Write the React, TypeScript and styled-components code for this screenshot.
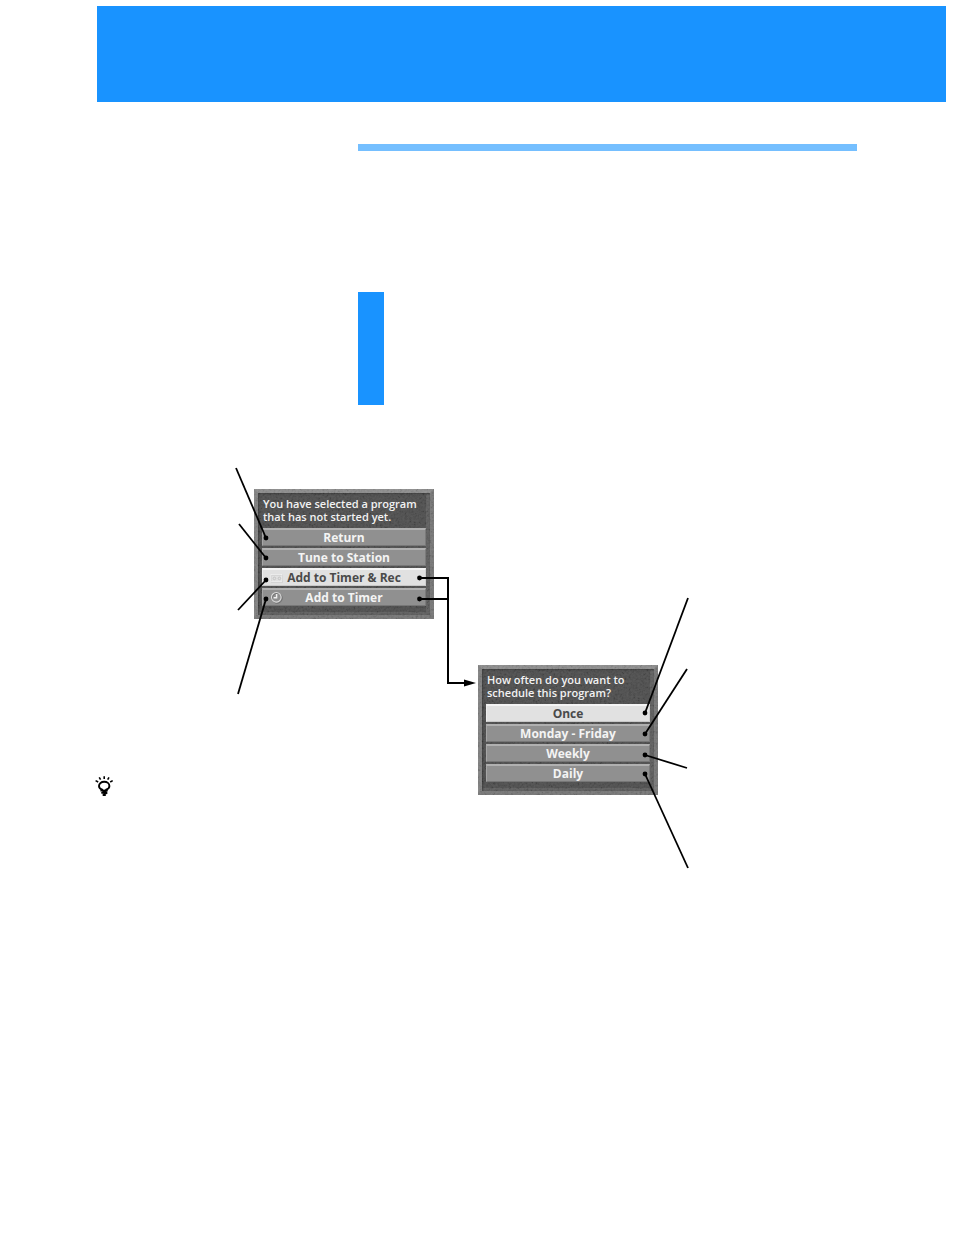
import React from 'react';
import styled, { createGlobalStyle, css } from 'styled-components';

const GlobalStyle = createGlobalStyle`
  *, *::before, *::after { box-sizing: border-box; }
  body {
    margin: 0;
    background: #fff;
    font-family: 'Open Sans', 'Noto Sans', sans-serif;
  }
`;

const Page = styled.main`
  padding: 6px 8px 40px 0;
`;

const Banner = styled.header`
  height: 96px;
  margin-left: 97px;
  background: #1993ff;
`;

const Section = styled.section`
  margin: 42px 89px 0 358px;
`;

const SectionRule = styled.div`
  height: 7px;
  background: #75bfff;
`;

const StepMarker = styled.div`
  width: 26px;
  height: 113px;
  margin-top: 141px;
  background: #1993ff;
`;

const Guide = styled.section`
  display: flex;
  align-items: flex-start;
  gap: 122px;
  margin-top: 62px;
  padding-left: 95px;
`;

const TipIcon = styled.svg`
  flex: none;
  width: 18px;
  height: 20px;
  margin-top: 309px;
  overflow: visible;
`;

const Diagram = styled.figure`
  position: relative;
  flex: none;
  width: 456px;
  height: 403px;
  margin: 0;
`;

const Callouts = styled.svg`
  position: absolute;
  inset: 0;
  width: 100%;
  height: 100%;
  pointer-events: none;
`;

const Dialog = styled.section<{ $x: number; $y: number }>`
  position: absolute;
  left: ${(p) => p.$x}px;
  top: ${(p) => p.$y}px;
  width: 180px;
  height: 130px;
  padding: 4px;
  border: 4px solid;
  border-color: #8b8b8b #747474 #747474 #7e7e7e;
  background: #4b4b4b;
  box-shadow: inset 1px 1px 2px #353535, inset -4px -3px 0 #5b5b5b;
`;

const Grain = styled.svg`
  position: absolute;
  inset: -4px;
  width: 180px;
  height: 130px;
  opacity: 0.08;
`;

const DialogTitle = styled.h2`
  position: relative;
  margin: 0 0 5px;
  padding: 0 0 0 1px;
  color: #f2f2f2;
  font-size: 11px;
  font-weight: 600;
  line-height: 13px;
  white-space: nowrap;
`;

const Options = styled.div`
  position: relative;
  display: flex;
  flex-direction: column;
  gap: 2px;
`;

const Option = styled.button<{ $active?: boolean }>`
  position: relative;
  height: 18px;
  padding: 0;
  border: solid;
  border-width: 2px 1px 1px;
  border-color: #b0b0b0 #7b7b7b #777 #a6a6a6;
  background: #909090;
  color: #f4f4f4;
  font: 700 12px/14px 'Open Sans', 'Noto Sans', sans-serif;
  text-align: center;
  ${(p) =>
    p.$active &&
    css`
      border-color: #f4f4f4 #cfcfcf #c8c8c8 #ededed;
      background: #e1e1e1;
      color: #4a4a4a;
    `}
`;

const OptionIcon = styled.svg`
  position: absolute;
  left: 7px;
  top: 1px;
  width: 13px;
  height: 13px;
`;

type Choice = { label: string; active?: boolean; icon?: 'tape' | 'clock' };

const selectedProgram: Choice[] = [
  { label: 'Return' },
  { label: 'Tune to Station' },
  { label: 'Add to Timer & Rec', active: true, icon: 'tape' },
  { label: 'Add to Timer', icon: 'clock' },
];

const frequency: Choice[] = [
  { label: 'Once', active: true },
  { label: 'Monday - Friday' },
  { label: 'Weekly' },
  { label: 'Daily' },
];

const leaders = [
  [236, 468, 266, 538],
  [239, 524, 266, 558],
  [238, 610, 266, 580],
  [238, 694, 266, 599],
  [688, 598, 645, 713],
  [687, 669, 645, 734],
  [687, 768, 645, 755],
  [688, 868, 645, 774],
];

function ClockIcon() {
  return (
    <OptionIcon viewBox="0 0 13 13" fill="none" aria-hidden="true">
      <circle cx="7.2" cy="7.2" r="5" stroke="#6c6c6c" strokeWidth="1" />
      <circle cx="6.3" cy="6.3" r="4.8" stroke="#dcdcdc" strokeWidth="1.1" />
      <path d="M6.6 3V6.8H3.6" stroke="#f0f0f0" strokeWidth="1.4" />
    </OptionIcon>
  );
}

function TapeIcon() {
  return (
    <OptionIcon viewBox="0 0 13 13" fill="none" aria-hidden="true">
      <rect x="1.5" y="4" width="11" height="7" stroke="#c9c9c9" />
      <rect x="1" y="3.5" width="11" height="7" stroke="#f4f4f4" strokeWidth="0.7" />
      <circle cx="4.4" cy="7.4" r="1.3" stroke="#c4c4c4" />
      <circle cx="9.4" cy="7.4" r="1.3" stroke="#c4c4c4" />
    </OptionIcon>
  );
}

function MenuDialog({ id, x, y, lines, choices }: {
  id: string;
  x: number;
  y: number;
  lines: [string, string];
  choices: Choice[];
}) {
  return (
    <Dialog $x={x} $y={y} aria-labelledby={id}>
      <Grain aria-hidden="true">
        <filter id={`${id}-grain`}>
          <feTurbulence type="fractalNoise" baseFrequency="0.45" numOctaves="2" />
          <feColorMatrix type="matrix" values="2 0 0 0 -0.5  2 0 0 0 -0.5  2 0 0 0 -0.5  0 0 0 0 1" />
        </filter>
        <rect width="100%" height="100%" filter={`url(#${id}-grain)`} />
      </Grain>
      <DialogTitle id={id}>
        {lines[0]}
        <br />
        {lines[1]}
      </DialogTitle>
      <Options>
        {choices.map((c) => (
          <Option key={c.label} type="button" $active={c.active}>
            {c.icon === 'clock' && <ClockIcon />}
            {c.icon === 'tape' && <TapeIcon />}
            {c.label}
          </Option>
        ))}
      </Options>
    </Dialog>
  );
}

export default function App() {
  return (
    <>
      <GlobalStyle />
      <Page>
        <Banner />
        <Section>
          <SectionRule />
          <StepMarker />
        </Section>
        <Guide>
          <TipIcon viewBox="0 0 18 20" fill="none" stroke="#000" role="img" aria-label="Tip">
            <path d="M0.6 4.6L3.2 6M4.2 1.4L5.6 3.6M9.2 0.2V3M14 1.4L12.7 3.6M17.7 4.6L15.2 6" strokeWidth="1.6" />
            <path d="M7.2 14.4V13.6C5.2 13 4 11.6 4 10C4 7.4 6.3 5.8 9.2 5.8S14.4 7.4 14.4 10C14.4 11.6 13.2 13 11.2 13.6V14.4" strokeWidth="1.9" />
            <path d="M5.4 14.6L12.6 14.4L6.4 17L12.2 16.8L7.8 19.2H10.8" strokeWidth="1.6" />
          </TipIcon>
          <Diagram>
            <MenuDialog
              id="selected-program"
              x={19}
              y={22}
              lines={['You have selected a program', 'that has not started yet.']}
              choices={selectedProgram}
            />
            <MenuDialog
              id="schedule-frequency"
              x={243}
              y={198}
              lines={['How often do you want to', 'schedule this program?']}
              choices={frequency}
            />
            <Callouts viewBox="235 467 456 403" aria-hidden="true">
              <g stroke="#000" strokeWidth="1.8">
                {leaders.map(([x1, y1, x2, y2]) => (
                  <line key={`${x1}-${y1}`} x1={x1} y1={y1} x2={x2} y2={y2} />
                ))}
              </g>
              {leaders.map(([, , x, y]) => (
                <circle key={`${x}-${y}`} cx={x} cy={y} r="2.4" />
              ))}
              <path d="M419 578H448V683H466M419 599H448" fill="none" stroke="#000" strokeWidth="2" />
              <circle cx="419.5" cy="578" r="2.4" />
              <circle cx="419.5" cy="599" r="2.4" />
              <path d="M464 679.5L476 683L464 686.5Z" />
            </Callouts>
          </Diagram>
        </Guide>
      </Page>
    </>
  );
}
